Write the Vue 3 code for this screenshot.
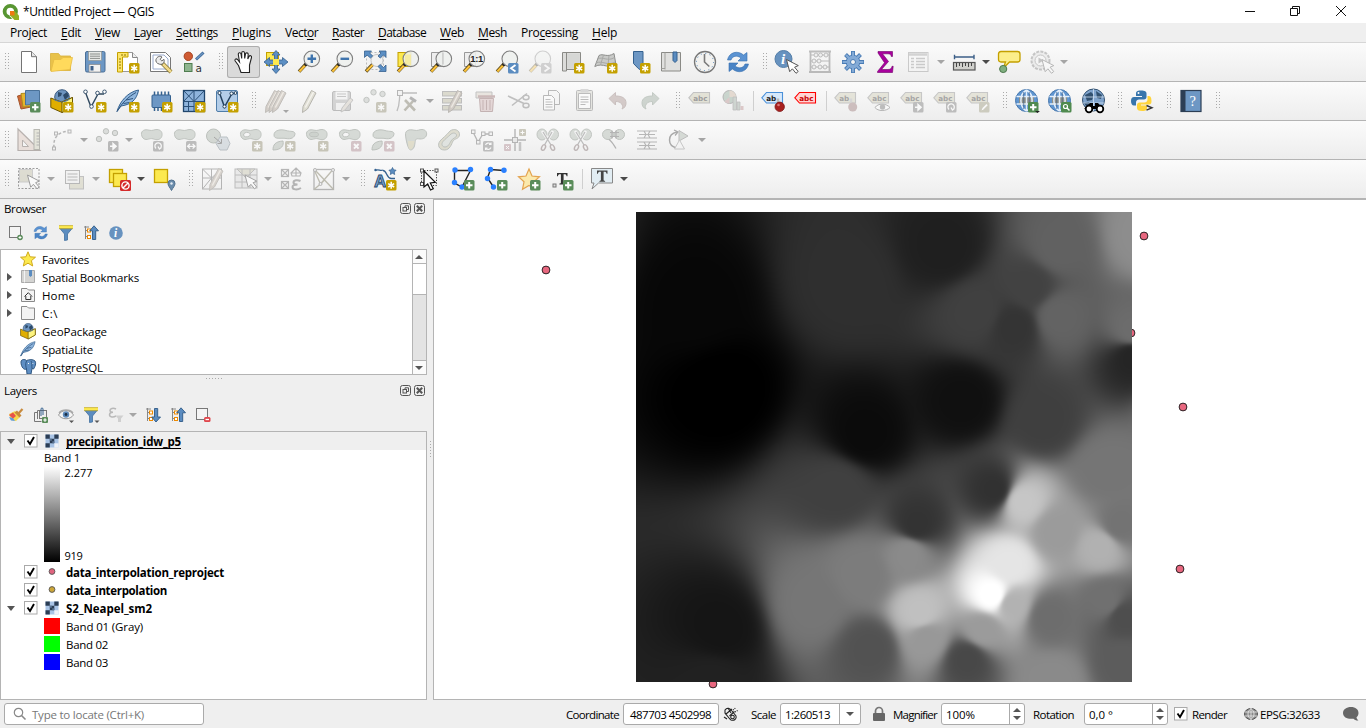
<script setup>
import { ref, onMounted } from 'vue'

/* ---------- text fitted to the metrics of the desktop theme ---------- */
const vFit = {
  mounted(el, { value }) {
    const w = el.getBoundingClientRect().width
    el.style.letterSpacing = (value - w) / el.textContent.length + 'px'
  }
}

/* ---------- icon building blocks ---------- */
const badge = (fill, inner) => `<rect x="13" y="13" width="10.5" height="10.5" rx="1.5" fill="${fill}"/>${inner}`
const star = '<path d="M18.2 14.8v7M15.2 16.6l6 3.4M21.2 16.6l-6 3.4" stroke="#fff" stroke-width="1.5"/>'
const NEW = badge('#c4a000', star)
const ADD = badge('#5a8c5a', '<path d="M18.2 15v6.6M15 18.3h6.5" stroke="#fff" stroke-width="2"/>')
const ROT = badge('#8a8a8a', '<path d="M16 20.5a3.2 3.2 0 1 1 3.6.4M18 18.5l1.4 2.6 2-1.6" stroke="#fff" stroke-width="1.3" fill="none"/>')
const MOV = badge('#8a8a8a', '<path d="M15 18.3h7M17 16l-2.4 2.3L17 20.6M19.6 16l2.4 2.3-2.4 2.3" stroke="#fff" stroke-width="1.3" fill="none"/>')
const ARR = badge('#8a8a8a', '<path d="M15 18.3h5M18 15.4l3.2 2.9-3.2 2.9z" stroke="#fff" stroke-width="1.4" fill="#fff"/>')
const DEL = badge('#b99aa0', '<path d="M16 16l4.600 4.600M20.600 16L16 20.600" stroke="#fff" stroke-width="2"/>')
const dim = (s, o = 0.38) => `<g opacity="${o}">${s}</g>`

const lens = (inside = '') =>
  `<path d="M9 14l-7 7.6" stroke="#5b4a1c" stroke-width="3.4"/><path d="M8 15.6l-5.6 5.8" stroke="#fcc23a" stroke-width="2.1"/><circle cx="9" cy="14.4" r="1.7" fill="#222"/>
   <circle cx="14.8" cy="8.8" r="7.8" fill="#eef0ee" fill-opacity=".88" stroke="#7f7f7f" stroke-width="1.1"/>${inside}`
const cursor = (x, y, c = '#fff', s = '#555') =>
  `<path transform="translate(${x} ${y})" d="M0 0l3.2 12.2 2.7-2.9 3.6 4.5 2.2-1.8-3.6-4.3 3.7-1.6z" fill="${c}" stroke="${s}" stroke-width="1"/>`
const folderLine = '<path d="M1.500 1.500h5.500l1.500 1.500h6v11.500h-13z" fill="#f3f3f3" stroke="#8a8a8a"/>'
const globe = `<circle cx="11.500" cy="11.500" r="11" fill="#5f95d0" stroke="#4576ac"/>
  <path d="M4 7h15v9H4z" fill="#8e9089"/>
  <path d="M11.500 1v21M1.500 7.500h20M1.500 15h20M11.500 1C4 5 4 18 11.500 22M11.500 1c7.500 4 7.500 17 0 21" stroke="#e4effb" stroke-width="1.500" fill="none"/>
  <path d="M8.700 3v17M14.300 3v17" stroke="#44618a" stroke-width=".7"/>`
const tag = (fill, stroke, text, o = 'abc', extra = '') =>
  `<path d="M.8 8.800L5.500 3.500h16v10.500h-16z" fill="${fill}" stroke="${stroke}" stroke-width="1.100"/>
   <text x="5.200" y="11.600" font-family="DejaVu Sans, Open Sans, sans-serif" font-weight="700" font-size="7.200" fill="${text}">${o}</text>${extra}`
const blob = `<path d="M1.500 6.500C1 2.500 5 1 9 2.200c3.500 1 5-.8 8-.7 4 .2 5.500 3 5 6-.6 3.500-4 5-7.500 3.800-2-.8-3.500-1-6-.2C5 12.300 2 10.500 1.500 6.500z" fill="#b9c1b9" stroke="#8d958d"/>`
const hole = '<path d="M4.500 7c0-2 2.500-3 4.500-2.500S12 7 10 8.200 4.600 9 4.500 7z" fill="#f6f6f6" stroke="#8d958d"/>'
const leaf = '<path d="M1 22c0-5 2-8.500 10-9 1 4-1 9-10 9z" fill="#b9c1b9" stroke="#8d958d"/>'
const nodes = (pts) => pts.map(([x, y]) => `<circle cx="${x}" cy="${y}" r="2.700" fill="#2a80ff"/>`).join('')
const scissor = `<ellipse cx="6" cy="6.500" rx="5" ry="5.500" fill="#b9c1b9" stroke="#8d958d"/><ellipse cx="17.500" cy="6.500" rx="5" ry="5.500" fill="#b9c1b9" stroke="#8d958d"/>
  <path d="M6 3l9.500 14M17 3L8.500 17" stroke="#f5f5f5" stroke-width="2.600"/><path d="M7 4l8 13M16 4L8.500 17" stroke="#888" stroke-width="1.300"/>
  <ellipse cx="7.500" cy="19.500" rx="1.800" ry="3" fill="none" stroke="#8a7a7a" stroke-width="1.400" transform="rotate(25 7.500 19.500)"/><ellipse cx="16.500" cy="19.500" rx="1.800" ry="3" fill="none" stroke="#8a7a7a" stroke-width="1.400" transform="rotate(-25 16.500 19.500)"/>`
const box = `<circle cx="12" cy="8" r="7.300" fill="#6d94bf" stroke="#3b5c82"/><path d="M8 3l4 1-1 3-3 1zM13 6l4-3 2 4-4 4z" fill="#2d4a69"/><path d="M.8 9l4 1.500 7 2.500L22.500 8.500v9L12 23.500.8 18.500z" fill="#e0ae00" stroke="#6b5500"/><path d="M12 13l10.500-4.500v9L12 23.500z" fill="#fdf480" stroke="#6b5500"/><path d="M3 10l9 3 8.500-3.500c-3 4.500-13 5-17.500.5z" fill="#4f759f"/>`
const feather = '<path d="M1 22.500C4 12 12 3 22.500 1c-1 6-4 11-9 13.500-3 1.500-6 2-8.500 2.500z" fill="#8fb6de" stroke="#34618f"/><path d="M1 22.500C6 14 12 8 20 3.500M7.500 14.500l6-1M10 11l7-1.500" stroke="#2f5680" stroke-width="1" fill="none"/>'
const refresh = '<path d="M1.500 10C3 2 12 0 17.500 5l3.500-2.500V11h-9l3-3C11 5 6.500 5.800 5 10z" fill="#5b93d2" stroke="#356fae" stroke-width=".6"/><path d="M22.500 14C21 22 12 24 6.500 19L3 21.500V13h9l-3 3c4 3 8.500 2.200 10-2z" fill="#4a84c6" stroke="#356fae" stroke-width=".6"/>'
const pencil = (x = 0) => `<path transform="translate(${x} 0)" d="M7 17.500L15.500 1.500l4.500 2.500L11.500 20 6.500 23.500z" fill="#bdb3a8" stroke="#96918a"/><path transform="translate(${x} 0)" d="M9.300 18.500L17.500 3" stroke="#e8e2d8" stroke-width="1.500"/>`

/* ---------- 24 × 24 toolbar icons ---------- */
const icons = {
  new: '<path d="M4.500 1.500h10l5 5.200v15.800h-15z" fill="#fff" stroke="#747474"/><path d="M14.500 1.500v5.200h5" fill="#e6e6e6" stroke="#747474"/>',
  open: '<path d="M.5 20.500v-17h8l2 2.500h10v14.500z" fill="#e8c24a" stroke="#d8b038" stroke-width=".8"/><path d="M1 21.500L4 9.500l7 0 2-2h9.500l-2.500 12z" fill="#ffda5c" stroke="#e7bd44" stroke-width=".8"/>',
  save: '<rect x="2.500" y="1.500" width="19.500" height="20.500" rx="1.500" fill="#6d97c4" stroke="#4a6f97"/><rect x="5.500" y="1.500" width="13" height="9" fill="#e7e9e7" stroke="#909590" stroke-width=".7"/><path d="M7 4h10M7 6.200h10M7 8.400h10" stroke="#8b8f8b"/><rect x="6" y="14.500" width="11.500" height="7.500" fill="#f2f2f2" stroke="#888" stroke-width=".7"/><rect x="7.500" y="16" width="3" height="4.500" fill="#3c5f88"/>',
  newlayout: `<path d="M6.500 2.500h10l5 5v14h-15z" fill="#fff" stroke="#999"/><path d="M16.500 2.500v5h5" fill="#eee" stroke="#888"/><path d="M1.500 2.500h10.500v4.500H6.500v15h-5z" fill="#fce56a" stroke="#c4a000"/><path d="M3 9h2M3 12h2M3 15h2M3 18h2M6 4v2M9 4v2" stroke="#8f7500"/>${NEW}`,
  layouts: '<path d="M1.500 2.500h15l5 5v14h-20z" fill="#fff" stroke="#777"/><path d="M4 5h11l4 4v10H4z" fill="none" stroke="#9ac"/><path d="M12 12l10 10" stroke="#7b6d2c" stroke-width="4"/><path d="M14 14l8 8" stroke="#f1d98a" stroke-width="2.600"/><path d="M7 9.500c1-3 4-4 6-2.500l-1.800 2.300 1.600 1.600L15 9.400c1 3-1.500 5.600-4.500 4.800S6.500 11.500 7 9.500z" fill="#ececec" stroke="#666"/>',
  style: '<circle cx="6.300" cy="6.300" r="4.200" fill="#cf5b33" stroke="#a54220"/><path d="M14 9.500l7.500-7" stroke="#3f6a9a" stroke-width="3"/><path d="M14.500 9l6.500-6" stroke="#6d97c4" stroke-width="1.200"/><rect x="2.500" y="13.500" width="7.500" height="8" fill="#8fb58f" stroke="#4f7d4f"/><text x="13.500" y="21.500" font-family="DejaVu Sans,sans-serif" font-size="10.500" fill="#333">a</text>',
  hand: '<path d="M7.500 15.500L4.200 11c-1-1.500.8-3 2.300-1.500L8.500 12 7.300 4.500C7 2.500 9.600 2.200 10 4l.7 4.500L10.700 3c0-2 2.700-2 2.800 0l.2 5.500L14.500 4c.3-1.800 2.900-1.400 2.700.5L16.800 9l1.200-2.500c.8-1.700 3-.8 2.500 1L18.500 15v7.500h-8.500z" fill="#fff" stroke="#222" stroke-width="1.100"/>',
  panmap: '<rect x="2.500" y="2.500" width="12" height="13" fill="#fce94f" stroke="#c4a000"/><path d="M12 .500l4 4.500h-2.500v5h5V7.500L24 12l-5.500 4.500V14h-5v5H16l-4 4.500L8 19h2.500v-5h-5v2.500L0 12l5.500-4.500V10h5V5H8z" fill="#5c8fc4" stroke="#36618f" stroke-width=".8"/><rect x="9" y="9" width="6" height="6" fill="#fce94f"/>',
  zoomin: lens('<path d="M14.800 4.500v8.600M10.500 8.800h8.600" stroke="#3f74ad" stroke-width="2.400"/>'),
  zoomout: lens('<path d="M10.500 8.800h8.600" stroke="#3f74ad" stroke-width="2.400"/>'),
  full: `<rect x="3.500" y="2.500" width="17" height="17" fill="#f2f2f2" stroke="#bbb" stroke-dasharray="2 2"/><path d="M11 13l-8 8.500" stroke="#5b4a1c" stroke-width="3.400"/><path d="M10 14.500L3.500 21" stroke="#fcc23a" stroke-width="2"/><circle cx="14" cy="10.500" r="6" fill="#f2f2f2" stroke="#c4c4c4"/><path d="M1.500 1h7L6.700 3l3 3L7.500 8 4 5 1.500 7.500zM23 1h-7l2 2-3 3 2.200 2L20.500 5 23 7.500zM23 21.500h-7l2-2-3-3 2.200-2 3.300 3L23 15z" fill="#5c8fc4" stroke="#36618f" stroke-width=".8"/>`,
  zoomsel: `<rect x="2" y="2.500" width="13" height="14" fill="#fce94f" stroke="#c4a000"/>${lens('<path d="M9 4.500h6v11l-6-1.500z" fill="#f5e88c" opacity=".7"/>')}`,
  zoomlayer: `<path d="M2.500 2.500h11v14h-11z" fill="#eee" stroke="#999"/>${lens('<path d="M14 2.500v12" stroke="#bbb"/>')}`,
  native: `<path d="M2.500 2.500h11v14h-11z" fill="#eee" stroke="#999"/>${lens('<text x="8.300" y="12.300" font-family="Liberation Sans,Arial,sans-serif" font-weight="700" font-size="9.500" textLength="13" fill="#222">1:1</text>')}`,
  last: `${lens()}${badge('#5b8cc0', '<path d="M20.500 15l-4.500 3.300 4.500 3.300" stroke="#fff" stroke-width="1.800" fill="none"/>')}`,
  next: dim(`${lens()}${badge('#8a8a8a', '<path d="M16.500 15l4.500 3.300-4.500 3.300" stroke="#fff" stroke-width="1.800" fill="none"/>')}`, 0.33),
  newmap: `<path d="M2 2.500h17.500v17H5.500v1.500H1.500V2.500z" fill="#dcdcda" stroke="#8a8a86"/><path d="M5.500 2.500v18" stroke="#8a8a86"/><path d="M6.500 4h12v14h-12z" fill="#d6d7d5"/>${NEW}`,
  new3d: `<path d="M5 5.500C9 3 13 8 20 3.500L22 15C16 20 9 12 .8 16.500z" fill="#c9cac8" stroke="#8c8d8b"/><path d="M3.500 9c5-3 10 3 17-1.500M2 13c6-3 12 3.500 19-1M9.500 5L6.500 15M15 5.500l-1 10" stroke="#a8a9a7" fill="none"/>${NEW}`,
  newbm: `<path d="M6.500 1.500h9.500v20l-4.700-3-4.800-5z" fill="#6d97c4" stroke="#34618f"/>${NEW}`,
  bm: '<path d="M1.500 2.500h19v18.500h-19z" fill="#e0e0de" stroke="#8a8a86"/><path d="M5 2.500v17M1.500 18.500h3.500" stroke="#a0a09c"/><path d="M13 2h4v8.500l-2 2-2-2z" fill="#5b8cc0" stroke="#34618f"/>',
  clock: '<circle cx="12" cy="12" r="10.500" fill="#f2f2f0" stroke="#777" stroke-width="1.300"/><circle cx="12" cy="12" r="8.600" fill="none" stroke="#4b7db0" stroke-width="1" stroke-dasharray="1 3.500"/><path d="M11.500 4v8l4.800 4.500" stroke="#7a7a7a" stroke-width="1.600" fill="none"/>',
  refresh,
  identify: `<circle cx="8.500" cy="9" r="8.500" fill="#6792bf" stroke="#557fa9"/><text x="6" y="14" font-family="Liberation Serif,serif" font-style="italic" font-weight="700" font-size="15" fill="#fff">i</text>${cursor(11.500, 9.500)}`,
  abacus: dim('<path d="M2.500 1v22M21.500 1v22M1 1.500h22M1 22h22" stroke="#777" stroke-width="1.800"/><path d="M3 5h18M3 11h18M3 17h18" stroke="#777"/><g fill="#e8e8e8" stroke="#777"><circle cx="8" cy="5" r="2"/><circle cx="12.500" cy="5" r="2"/><circle cx="18" cy="5" r="2"/><circle cx="6" cy="11" r="2"/><circle cx="11" cy="11" r="2"/><circle cx="6" cy="17" r="2"/><circle cx="12" cy="17" r="2"/><circle cx="17" cy="17" r="2"/></g>', 0.45),
  gear: '<g stroke="#4a7cb5" stroke-width="4"><path d="M12 1v22M1 12h22M4.500 4.500l15 15M19.500 4.500l-15 15"/></g><circle cx="12" cy="12" r="6.800" fill="#83aad6" stroke="#4a7cb5"/><g stroke="#83aad6" stroke-width="2.200"><path d="M12 1.700v20.600M1.700 12h20.600M5 5l14 14M19 5L5 19"/></g><circle cx="12" cy="12" r="5.500" fill="#83aad6"/><circle cx="12" cy="12" r="2.500" fill="#f5f5f5" stroke="#4a7cb5"/>',
  sigma: '<path d="M4 1.500h14.500v5h-1.200c-.4-2-1.300-2.700-3.300-2.700H8.500l6 7.700L7.500 19.500H14c2.600 0 3.500-1 4-3.200h1.200L18.500 22.500H3.500v-1l7-8.800L4 3z" fill="#a8009d" stroke="#6f0068" stroke-width=".6"/>',
  table: dim('<rect x="1.500" y="2.500" width="19.500" height="19" fill="#f7f7f7" stroke="#888"/><path d="M2 4.500h18" stroke="#999" stroke-width="2.500"/><path d="M4 8.500h3M9 8.500h9M4 11.500h3M9 11.500h9M4 14.500h3M9 14.500h9M4 17.500h3M9 17.500h9" stroke="#888" stroke-width="1.300"/>', 0.38),
  measure: '<path d="M2 7h20M2.500 4.800v4.400M22 4.800v4.400" stroke="#3c5f88" stroke-width="1.400"/><rect x="1.500" y="12.500" width="21.500" height="7.500" fill="#d0d0cc" stroke="#555" stroke-width="1.200"/><path d="M4.500 13v4M7.500 13v3M10.500 13v4M13.500 13v3M16.500 13v4M19.500 13v3" stroke="#444"/>',
  tip: '<path d="M4 1.500h16.500q2.500 0 2.500 2.500v5.500q0 2.500-2.500 2.500H12.500l-6 6 2-6H4q-2.500 0-2.500-2.500V4q0-2.500 2.500-2.500z" fill="#fcee8a" stroke="#c4a000" stroke-width="1.300"/><circle cx="6.200" cy="19" r="3.600" fill="#7fae7f" stroke="#4d784d"/>',
  action: dim(`<circle cx="10.500" cy="10.500" r="9" fill="#ddd" stroke="#777" stroke-width="2" stroke-dasharray="3 1.200"/><circle cx="10.500" cy="10.500" r="5.500" fill="#f5f5f5" stroke="#777"/><path d="M8.500 7.500l5 3-5 3z" fill="#777"/>${cursor(12, 9.500)}`, 0.38),
  dsm: `<path d="M.5 7l13-3.500 3 14L4 20z" fill="#cf6a35" stroke="#a3562c"/><path d="M4 4.500l13-1 1 13.500-12 1z" fill="#e5b52e" stroke="#b08c1c"/><path d="M8.500 1.500L22.500 1.500v13.500l-14 1z" fill="#6d97c4" stroke="#4a7199"/>${ADD}`,
  gpkg: `${box}${NEW}`,
  shp: `<path d="M2.500 3.500L8 18 15 5h6" stroke="#31495f" stroke-width="1.400" fill="none"/><g fill="#fff" stroke="#3c5670"><circle cx="2.500" cy="2.800" r="1.800"/><circle cx="8.500" cy="17.500" r="1.800"/><circle cx="14.500" cy="4" r="1.800"/><circle cx="21.500" cy="2.800" r="1.800"/></g>${NEW}`,
  spatialite: `${feather}${NEW}`,
  memory: `<rect x="3" y="6" width="18.500" height="12.500" rx="1" fill="#6d97c4" stroke="#34618f"/><path d="M5.500 2.500V6M9 2.500V6M12.500 2.500V6M16 2.500V6M19.500 2.500V6M5.500 18.500V22M9 18.500V22M12.500 18.500V22" stroke="#34618f" stroke-width="1.500"/>${NEW}`,
  mesh: `<rect x="1.500" y="1.500" width="21" height="21" fill="#8fb4dc" stroke="#20456b" stroke-width="1.300"/><path d="M12 1.500v21M1.500 12.500h21M1.500 1.500l10.500 11M12 1.500l-10.500 11M12 12.500l10.500-11M6.500 12.500v10M1.500 17.500h10.500" stroke="#2c5178" stroke-width="1"/>${NEW}`,
  virtual: `<rect x="1.500" y="1.500" width="21" height="21" rx="1.500" fill="#b3cde8" stroke="#4f7da9"/><path d="M4.500 4L9.500 18 17 4.500h3" stroke="#23415e" stroke-width="1.500" fill="none"/><g fill="#fff" stroke="#23415e"><circle cx="4.500" cy="4" r="1.600"/><circle cx="9.500" cy="17.500" r="1.600"/><circle cx="16.500" cy="4.500" r="1.600"/><circle cx="20.500" cy="4" r="1.400"/></g>${NEW}`,
  edits: `${dim(pencil(-5) + pencil(-1.500) + pencil(2), 0.55)}<path d="M19 21h6l-3 3z" fill="#a5a5a5"/>`,
  edit: dim('<path d="M6 17.500L14.500 1.500l4.500 2.500L10.500 20 5.500 23.500z" fill="#d6d4c4" stroke="#96948a"/><path d="M8.300 18.500L16.500 3" stroke="#f4f2ea" stroke-width="1.500"/>', 0.65),
  saveedit: dim('<rect x="2.500" y="2.500" width="18" height="19" rx="1.500" fill="#b4b4b4" stroke="#888"/><rect x="5.500" y="2.500" width="12" height="8" fill="#f2f2f2"/><path d="M7 5h9M7 7.500h9" stroke="#999"/><rect x="6" y="14" width="10" height="7" fill="#eee"/><path d="M12 19l8-10 3 2-8 10-4 2z" fill="#d8d2c8" stroke="#999"/>', 0.5),
  addpt: dim(`<g fill="#c5c9c5" stroke="#909590"><circle cx="3.500" cy="11" r="2.700"/><circle cx="10.500" cy="3.300" r="2.700"/><circle cx="19.500" cy="5" r="2.700"/></g>${badge('#a09c84', star)}`, 0.5),
  vertex: dim('<path d="M4 4v0C3 12 4 15 1 22M5 4h16" stroke="#888" fill="none" stroke-width="1.300"/><rect x="1.500" y="1.500" width="5" height="5" fill="#eee" stroke="#777"/><path d="M8.500 21.500l10-11M9 11l10 10.500" stroke="#8b8877" stroke-width="2.600"/><path d="M14 8.500l6 4" stroke="#777" stroke-width="3"/>', 0.5),
  multiedit: dim(`<g fill="#c9c7b4" stroke="#999"><rect x="1.500" y="2.500" width="19" height="4.500"/><rect x="1.500" y="9.500" width="19" height="4.500"/><rect x="1.500" y="16.500" width="19" height="4.500"/></g>${pencil(1)}`, 0.6),
  trash: dim('<path d="M2 3h16v6H2z" fill="#ddd6cc" stroke="#999"/><path d="M4 7.500h17" stroke="#a88" stroke-width="2.500"/><path d="M5.500 9.500h14l-1 13h-12z" fill="#d8c0c0" stroke="#a08080"/><path d="M9 11v10M12.500 11v10M16 11v10" stroke="#a08080"/>', 0.55),
  cut: dim('<path d="M1 7l16 7.500M5 16.500L20 4.500" stroke="#777" stroke-width="1.600"/><ellipse cx="19" cy="8.500" rx="3" ry="2.200" fill="none" stroke="#777" stroke-width="1.500"/><ellipse cx="19" cy="16.500" rx="3" ry="2.200" fill="none" stroke="#777" stroke-width="1.500"/>', 0.42),
  copy: dim('<path d="M8.500 1.500h8l3 3v11h-11z" fill="#f6f6f6" stroke="#777"/><path d="M3.500 6.500h8l3 3v11.500h-11z" fill="#fff" stroke="#777"/><path d="M5.500 10.500h5M5.500 13h7M5.500 15.500h7M5.500 18h7" stroke="#888"/>', 0.48),
  paste: dim('<rect x="3.500" y="1.500" width="16" height="20" rx="1" fill="#d8d8d0" stroke="#888"/><path d="M5.500 4.500h12v15h-12z" fill="#fff" stroke="#888"/><path d="M7.500 8h8M7.500 10.500h8M7.500 13h8M7.500 15.500h5" stroke="#888"/><rect x="7.500" y="0" width="8" height="3.500" fill="#bbb"/>', 0.52),
  undo: dim('<path d="M3 9.500L9.500 3.500v3.500c7 0 10.500 2.500 10.500 7 0 3-1.500 5-4 6 1-2 1-3-.5-5.200C14.300 13 12 12.500 9.500 12.500V16z" fill="#b5a29f" stroke="#a08d8a"/>', 0.5),
  redo: dim('<path d="M20 9.500L13.500 3.500v3.500C6.500 7 3 9.500 3 14c0 3 1.500 5 4 6-1-2-1-3 .5-5.200 1.200-1.800 3.500-2.300 6-2.300V16z" fill="#a9b5ab" stroke="#93a095"/>', 0.5),
  lab1: dim(tag('#d4d2bd', '#999', '#555'), 0.55),
  diagram: dim('<circle cx="8.500" cy="8" r="6.500" fill="#a9bdb0" stroke="#888"/><path d="M8.500 8V1.500A6.500 6.500 0 0 1 15 8z" fill="#d6c5b5"/><path d="M8.500 8l-5 4.500a6.500 6.500 0 0 0 5 2z" fill="#c9a9a9"/><path d="M12 8h3.500v13H12zM16 13h3v8h-3z" fill="#b5c0b8" stroke="#999" stroke-width=".8"/><rect x="19.500" y="17" width="3" height="4" fill="#caa"/>', 0.58),
  lab2: tag('#d7e9fb', '#4a90d9', '#222', 'ab', '<path d="M17 16.500V9.500" stroke="#b9b9b9" stroke-width="2.500"/><circle cx="18.700" cy="17.800" r="4.700" fill="#a8201f" stroke="#7c1212" stroke-width=".8"/><circle cx="17.500" cy="16" r="1.300" fill="#d77"/>'),
  lab3: tag('#ffd5d5', '#f00', '#c80000'),
  lab4: dim(tag('#d4d2bd', '#999', '#555', 'ab', '<path d="M17 16.500V9.500" stroke="#b9b9b9" stroke-width="2.500"/><circle cx="18.700" cy="18" r="4.500" fill="#a88a8a"/>'), 0.5),
  lab5: dim(tag('#d4d2bd', '#999', '#555', 'abc', '<path d="M8 18.500c3-4.500 11-4.500 15 0-4 4-12 4-15 0z" fill="#fff" stroke="#777"/><circle cx="15.500" cy="18" r="2.700" fill="#888"/>'), 0.5),
  lab6: dim(tag('#d4d2bd', '#999', '#555', 'abc', ARR), 0.5),
  lab7: dim(tag('#d4d2bd', '#999', '#555', 'abc', ROT), 0.5),
  lab8: dim(tag('#d4d2bd', '#999', '#555', 'abc', badge('#a9a78e', '<path d="M15.500 21.500l1-2.500 4-4 1.200 1.200-4 4z" fill="#fff"/>')), 0.5),
  web1: `${globe}${badge('#4f8a4f', '<path d="M18.200 15v6.600M15 18.300h6.500" stroke="#fff" stroke-width="2"/>')}<path d="M20 22h5l-2.500 2z" fill="#222"/>`,
  web2: `${globe}${badge('#4f8a4f', '<circle cx="17.500" cy="17.500" r="2" fill="none" stroke="#fff" stroke-width="1.200"/><path d="M19 19l2.500 2.500" stroke="#fff" stroke-width="1.500"/>')}`,
  web3: '<circle cx="12.500" cy="11" r="11" fill="#7fa3cc" stroke="#31506f"/><path d="M4 6l6-3 3 3-2 5-5 1zM15 2l6 4-1 4-4-1zM3 14l5-1 2 5-3 2z" fill="#31506f"/><path d="M12.500 0v22M2 8h21M2 14h21" stroke="#cfe0f2" stroke-width=".8"/><path d="M9 14h3v3h2v-3h3l5 6h-19z" fill="#000"/><circle cx="8" cy="20" r="3.300" fill="#fff" stroke="#000" stroke-width="1.800"/><circle cx="19" cy="20" r="3.300" fill="#fff" stroke="#000" stroke-width="1.800"/>',
  python: '<path d="M11 1.500c-4.500 0-5 1.500-5 3v2.500h6v1H4C2 8 1 9.500 1 12s1 4.500 3 4.500h2v-3c0-2 1.500-3 3-3h5c1.500 0 2.500-1 2.500-2.500V4.500c0-2-1.500-3-5.500-3z" fill="#3775ac"/><path d="M12 22c4.500 0 5-1.500 5-3v-2.500h-6v-1h8c2 0 2.500-1.500 2.500-3.500s-.5-5-2.500-5h-1.500v3.500c0 2-1.500 3-3 3h-5c-1.500 0-2.500 1-2.500 2.500v3c0 2 1.500 3 5 3z" fill="#ffd43b"/><circle cx="8.500" cy="4" r="1" fill="#fff"/><path d="M16.500 16.500l5.500 2.300-5.500 2.400" stroke="#333" stroke-width="1.400" fill="none"/>',
  help: '<rect x="2" y="1.500" width="20" height="21" fill="#6d97c4" stroke="#2c3e55" stroke-width="1.200"/><rect x="2" y="1.500" width="4.500" height="21" fill="#2c3e55"/><text x="10.500" y="17" font-family="Liberation Serif,serif" font-size="14.500" fill="#fff">?</text>',
  setsq: dim('<path d="M1 1v21.500h22z" fill="#e3d3cb" stroke="#8f8580" stroke-width="1.200"/><path d="M5.500 12v6.500h6z" fill="#f6f6f6" stroke="#8f8580"/><rect x="17" y="1.500" width="5.500" height="20" fill="#d9d9c8" stroke="#8f8f85"/><path d="M19.500 5h3M19.500 8h3M19.500 11h3M19.500 14h3M19.500 17h3" stroke="#888"/>', 0.6),
  arc: dim('<path d="M4 20C3 9 8 4 19 3" stroke="#777" stroke-width="1.500" fill="none" stroke-dasharray="3 2"/><g fill="#eee" stroke="#777"><rect x="2.500" y="19" width="3" height="3"/><rect x="4.500" y="4" width="3" height="3"/><rect x="18" y="2" width="3" height="3"/></g>', 0.5),
  movept: dim(`<g fill="#c5c9c5" stroke="#909590"><circle cx="4" cy="11" r="2.700"/><circle cx="11" cy="3.300" r="2.700"/><circle cx="20" cy="5" r="2.700"/></g>${ARR}`, 0.55),
  rotf: dim(blob + ROT, 0.52),
  movf: dim(blob + MOV, 0.52),
  simp: dim('<circle cx="7.500" cy="8" r="7" fill="#b9c1b9" stroke="#8d958d"/><path d="M14 9h7l3 6.500-3 6.500h-7l-4-6.500z" fill="#c3ccd3" stroke="#8d98a0"/><path d="M8 9l7 6M15.500 11v4.500h-4" stroke="#666" fill="none"/>', 0.55),
  ring: dim(blob + hole + badge('#a09c84', star), 0.52),
  part: dim(`<path d="M2 7C2 2 9 1 14 2.500s8 0 9 3c0 4-4 6-9 5S2 12 2 7z" fill="#b9c1b9" stroke="#8d958d"/>${leaf}${badge('#a09c84', star)}`, 0.52),
  fill: dim(blob + '<ellipse cx="9" cy="6.500" rx="4.500" ry="2.300" fill="#a9b3a9" stroke="#8d958d"/>' + badge('#a09c84', star), 0.52),
  delring: dim(blob + hole + DEL, 0.52),
  delpart: dim(`<path d="M2 7C2 2 9 1 14 2.500s8 0 9 3c0 4-4 6-9 5S2 12 2 7z" fill="#b9c1b9" stroke="#8d958d"/>${leaf}${DEL}`, 0.52),
  reshape: dim('<path d="M1.500 7C1 2.500 5 1 10 2.200c4 1 5-.8 8-.7 4 .2 5 3 4.500 5.500-.6 3-4 4.500-8 3.800-4-.6-3 3-4 7-1 3.500-3.500 5-5 3.500C3.500 19 2 12 1.500 7z" fill="#b9c1b9" stroke="#8d958d"/><path d="M4 13h6.500c-.5 5-2 8-4 8.500C4 21 4 17 4 13z" fill="#cfc9a8"/>', 0.52),
  offset: dim('<path d="M13 3c4-3 10-1 9.500 4-.5 4-5 3.500-6.500 6-1.500 3-3 9-8.500 9C2 22 0 17 3 13c2.500-3 6-5 10-10z" fill="#c9c6ae" stroke="#8d958d"/><path d="M14 6c3-2 6-.5 5.500 2-.5 2-4 2-5.500 5s-3 6-6 6-4-3-2-5.500c2-2.500 5-4.500 8-7.500z" fill="#cfd5cf" stroke="#8d958d"/>', 0.52),
  splitv: dim(`<path d="M3 4l5 10L13 6h8" stroke="#777" stroke-width="1.300" fill="none"/><g fill="#eee" stroke="#777"><rect x="1.500" y="2" width="3.500" height="3.500"/><rect x="6.500" y="12.500" width="3.500" height="3.500"/><rect x="11.500" y="4" width="3.500" height="3.500"/><rect x="19" y="4" width="3.500" height="3.500"/></g>${badge('#8a8a8a', '<path d="M15.500 17a3 3 0 0 1 5-1M21 19.500a3 3 0 0 1-5 1M21 14.500v2h-2M15.500 22v-2h2" stroke="#fff" stroke-width="1.100" fill="none"/>')}`, 0.5),
  cross: dim('<path d="M12 1v22M1 12h22" stroke="#777" stroke-width="1.400"/><rect x="9.500" y="9.500" width="5" height="5" fill="#ddd" stroke="#777"/><path d="M17 14v9" stroke="#999" stroke-width="2.500"/><rect x="16" y="1" width="7" height="7" rx="1" fill="#a09c84"/><path d="M19.500 2.500v4M17.500 4.500h4" stroke="#fff"/><rect x="1" y="16" width="7" height="7" rx="1" fill="#b99aa0"/><path d="M3 18l3 3M6 18l-3 3" stroke="#fff"/>', 0.5),
  splitf: dim(scissor, 0.5),
  splitp: dim(scissor, 0.5),
  merge: dim('<ellipse cx="6" cy="6.500" rx="5.500" ry="5" fill="#b9c1b9" stroke="#8d958d"/><ellipse cx="17.500" cy="6.500" rx="5" ry="5" fill="#b9c1b9" stroke="#8d958d"/><path d="M8 4.500h9M8 8.500h9M10 2.500v8M14 2.500v8M7 11.500c3 2 5 6 7 9" stroke="#777" fill="none" stroke-width="1.200"/>', 0.52),
  align: dim('<path d="M2 3h20M2 10h20M2 14h20M2 21h20M4 6.500h16M4 17.500h16M9 3l2 3.500L9 10M15 3l-2 3.500 2 3.500M9 14l2 3.500L9 21M15 14l-2 3.500 2 3.500" stroke="#777" stroke-width="1.100" fill="none"/>', 0.5),
  rotsym: dim('<path d="M9 20C-1 18-1 6 9 4" stroke="#777" fill="none" stroke-width="1.400"/><path d="M6 2l4 2-3 3.500" stroke="#777" stroke-width="1.200"/><path d="M11 2.500l9 5.500-9 5z" fill="#c0c8c0" stroke="#999"/><path d="M11.500 12l5 9h-10z" fill="#f4f4f4" stroke="#aaa"/>', 0.6),
  select: dim(`<rect x="1.500" y="1.500" width="20.500" height="20" fill="none" stroke="#555" stroke-dasharray="2 1.500"/><rect x="2.500" y="2.500" width="13" height="12.500" fill="#c9c7b4" stroke="#aaa"/>${cursor(10.500, 8)}`, 0.55),
  form: dim('<rect x="7.500" y="9.500" width="14" height="12.500" fill="#d2d0bb" stroke="#999"/><rect x="3.500" y="3.500" width="14" height="13" fill="#eee" stroke="#888"/><path d="M5.500 7h10M5.500 10h10M5.500 13h10" stroke="#aaa" stroke-width="1.600"/>', 0.55),
  desel: '<rect x="2.500" y="2.500" width="13" height="13" fill="#fce94f" stroke="#c4a000" stroke-width="1.300"/><rect x="6.500" y="6.500" width="13" height="13" fill="#fce94f" stroke="#c4a000" stroke-width="1.300"/><rect x="13" y="13" width="11" height="11" rx="1.500" fill="#d42a2a"/><circle cx="18.500" cy="18.500" r="3.600" fill="none" stroke="#fff" stroke-width="1.400"/><path d="M16 21l5-5" stroke="#fff" stroke-width="1.400"/>',
  loc: '<rect x="2.500" y="2.500" width="13" height="13" fill="#fce94f" stroke="#c4a000" stroke-width="1.300"/><path d="M19.500 23.500c-1.500-3-3.500-4.500-3.500-7a3.500 3.500 0 0 1 7 0c0 2.500-2 4-3.500 7z" fill="#6b8dac" stroke="#4f6f8d"/><circle cx="19.500" cy="16.500" r="1.200" fill="#e8eef4"/>',
  meshed: dim(`<rect x="1.500" y="2" width="19" height="20" fill="none" stroke="#777"/><path d="M1.500 2l9 9 10-9M1.500 22V11h19M10.500 2v20M1.500 22l9-11" stroke="#777" fill="none"/>${pencil(2)}`, 0.5),
  meshsel: dim(`<rect x="1" y="2" width="22" height="19" fill="#ddd" stroke="#888"/><path d="M3 2h18l-9 9z" fill="#cbc9b5" stroke="#888"/><path d="M1 8h22M1 15h22M8 2v19M16 2v19" stroke="#888"/>${cursor(11, 8)}`, 0.5),
  meshtr: dim('<g fill="none" stroke="#777" stroke-width="1.200"><rect x="2.500" y="2.500" width="7" height="7"/><path d="M2.500 2.500l7 7M9.500 2.500l-7 7"/><rect x="2.500" y="14.500" width="7" height="7"/><path d="M2.500 14.500l7 7M9.500 14.500l-7 7"/><path d="M17 1l5 5-1 3h-8l-1-3zM17 1v8M12 6h10"/></g><path d="M21.500 14c-3-1.500-7-1-7 1.500 0 2 2 2 4 2-3 0-5 .5-5 2.500 0 3 5 3 8.500 1" stroke="#777" stroke-width="2" fill="none"/>', 0.5),
  meshforce: dim('<rect x="2" y="2.500" width="19.500" height="20" fill="none" stroke="#777" stroke-width="1.300"/><path d="M2 2.500l6.500 14.500 12.500-14.500M8.500 17L2 22.500M8.500 17l4-4 9 9.500M12.500 13l-10-10.500" stroke="#88856e" stroke-width="1.300" fill="none"/><g fill="#eee" stroke="#777"><circle cx="3" cy="3" r="1.500"/><circle cx="21" cy="3" r="1.500"/><circle cx="8.500" cy="17" r="1.500"/></g>', 0.5),
  annot: `<path d="M2 3.500c4-2 5 1 8-.5M10 3.500c4 0 3 7 8 8h4" stroke="#34618f" fill="none" stroke-width="1.300"/><circle cx="2.500" cy="3" r="1.200" fill="#34618f"/><text x="1" y="20" font-family="Liberation Sans,Arial,sans-serif" font-weight="700" font-size="17" fill="#7fa6d0" stroke="#26496e" stroke-width=".9">A</text><path d="M19.500.500l1.100 2.300 2.500.4-1.800 1.800.4 2.500-2.200-1.200-2.200 1.200.4-2.500L15.900 3.200l2.500-.4z" fill="#5b8cc0" stroke="#34618f" stroke-width=".7"/>${NEW}`,
  modann: `<rect x="3.500" y="3.500" width="15" height="15" fill="none" stroke="#333" stroke-dasharray="1.200 1.500"/><g fill="#f5f5f5" stroke="#555"><rect x="2.500" y="2" width="3" height="3"/><rect x="17" y="2" width="3" height="3"/><rect x="2.500" y="15.500" width="3" height="3"/></g><path d="M6 4v16l3.700-3 2.800 6 2.800-1.300-3-5.700 5-.6z" fill="#fff" stroke="#111" stroke-width="1.200"/>`,
  poly: `<path d="M3.500 3.500h16L11 20 3.500 16z" fill="none" stroke="#222" stroke-width="1.400"/>${nodes([[4, 3], [19.500, 2.500], [3.500, 15.500], [11, 20]])}${ADD}`,
  line: `<path d="M20 3.500L6.500 2.500 3.500 11l6 9" fill="none" stroke="#222" stroke-width="1.400"/>${nodes([[20, 3.300], [6.500, 2.500], [3.500, 11.500], [9.500, 20]])}${ADD}`,
  starann: `<path d="M12 2l3 7 7.500 .8-5.600 5 1.600 7.500L12 18.500l-6.500 3.800L7 14.800 1.500 9.800 9 9z" fill="#fbe9ad" stroke="#e3a34f" stroke-width="1.200"/>${ADD}`,
  textann: `<rect x="3" y="17" width="3" height="3" fill="#ddd" stroke="#777"/><path d="M7 6h10.500v3.300h-.9c-.3-1.500-.8-2-2-2h-1v8.200c0 .8.3 1 1.500 1.100v.8H9.400v-.8c1.200-.1 1.500-.3 1.500-1.100V7.300h-1c-1.200 0-1.700.5-2 2H7z" fill="#333"/>${ADD}`,
  textballoon: '<path d="M1.500 1.500h21V16H8.500L2 22l2-6H1.500z" fill="#e2edf3" stroke="#888"/><path d="M7 3.500h10.500v3.300h-.9c-.3-1.500-.8-2-2-2h-1v8c0 .8.3 1 1.500 1.100v.8h-5.700v-.8c1.200-.1 1.500-.3 1.500-1.100v-8h-1c-1.200 0-1.700.5-2 2H7z" fill="#444"/>'
}

/* ---------- 16 × 16 panel icons ---------- */
const small = {
  add: '<rect x="1.500" y="1.500" width="11" height="11" fill="#f4f4f4" stroke="#777"/><circle cx="12" cy="12.500" r="2.800" fill="#5a8c5a"/><path d="M12 11v3M10.500 12.500h3" stroke="#fff"/>',
  refresh: `<g transform="scale(.64)">${refresh}</g>`,
  filter: '<path d="M1.500 3h13l-5 6v6l-3 .500V9z" fill="#5b8cc0" stroke="#41709f" stroke-width=".8"/><path d="M1 2h14" stroke="#fce94f" stroke-width="3"/><path d="M1 .6h14M1 3.700h14" stroke="#b59b18" stroke-width=".6"/>',
  collapse: '<path d="M2.500 1v13M2.500 5.500H6M2.500 11.500H6M1 2h5" stroke="#888" fill="none"/><rect x="4.500" y="4" width="3" height="3" fill="#fff" stroke="#f08b00"/><rect x="4.500" y="10.500" width="3" height="3" fill="#fff" stroke="#f08b00"/><path d="M11 .800l4.500 5h-2.800V14.500H9.500V5.800H6.700z" fill="#5b8cc0" stroke="#2f5a87" stroke-width=".9"/>',
  expand: '<path d="M2.500 1v13M2.500 5.500H6M2.500 11.500H6M1 2h5" stroke="#888" fill="none"/><rect x="4.500" y="4" width="3" height="3" fill="#fff" stroke="#f08b00"/><rect x="4.500" y="10.500" width="3" height="3" fill="#fff" stroke="#f08b00"/><path d="M11 15l4.500-5h-2.800V1.500H9.500V10H6.700z" fill="#5b8cc0" stroke="#2f5a87" stroke-width=".9"/>',
  info: '<circle cx="8" cy="8" r="6.800" fill="#6792bf"/><text x="6" y="12" font-family="Liberation Serif,serif" font-style="italic" font-weight="700" font-size="11.500" fill="#fff">i</text>',
  brush: '<path d="M1 7l6-3 5 6-4 4-5-1z" fill="#f5d84e"/><path d="M1 10l4 1 2 3-4-.5z" fill="#5f9de0"/><path d="M1 8l4-2.500 3 3.500-3 2.500z" fill="#e8524a"/><path d="M6.500 5.500l5 5 2-2-4.500-5z" fill="#c88a3c"/><path d="M10.500 6.500l4-4.500" stroke="#c88a3c" stroke-width="2.200"/>',
  group: '<path d="M1.500 5.500v9M1.500 5.500H4M4.500 3.500v8.500M4.500 3.500H7M1.500 14.500h7" stroke="#777" fill="none"/><rect x="6.500" y="3.500" width="7" height="8" fill="#eee" stroke="#777"/><path d="M8 9V2a1 1 0 0 1 2 0V8" stroke="#34618f" fill="none"/><rect x="9" y="10" width="6" height="6" rx="1" fill="#5a8c5a"/><path d="M12 11.300v3.400M10.300 13h3.400" stroke="#fff" stroke-width="1.200"/>',
  eye: '<path d="M.5 8C4 2 12 2 15.500 8 12 13 4 13 .5 8z" fill="#f5f5f5" stroke="#999"/><path d="M1 6C4 2 12 2 15 6" stroke="#aaa" fill="none" stroke-width="1.300"/><circle cx="8" cy="7.500" r="3.200" fill="#5c89ba"/><circle cx="8" cy="7.500" r="1.400" fill="#1c2f45"/><path d="M11 13.500h5l-2.500 2.500z" fill="#555"/>',
  filterc: '<path d="M1.500 3h13l-5 6v6l-3 .500V9z" fill="#5b8cc0" stroke="#41709f" stroke-width=".8"/><path d="M1 2h14" stroke="#fce94f" stroke-width="3"/><path d="M1 .6h14M1 3.700h14" stroke="#b59b18" stroke-width=".6"/><path d="M11.500 13.500h5l-2.500 2.500z" fill="#555"/>',
  expr: '<g opacity=".45"><path d="M8 2C5 .5 2 1.500 2 3.500 2 5 3.500 5.200 5 5.200 3 5.200 1.500 6 1.500 7.800c0 2.500 4 2.800 6.500 1" stroke="#777" stroke-width="1.500" fill="none"/><path d="M7.500 8.500h8l-2.500 3v3.500h-3v-3.500z" fill="#aaa"/></g>',
  remove: '<rect x="1.500" y="1.500" width="11" height="11" fill="#f4f4f4" stroke="#777"/><rect x="9" y="10" width="6.500" height="5" rx="1.500" fill="#e0464c"/><path d="M10.500 12.500h3.500" stroke="#fff" stroke-width="1.300"/>',
  star: '<path d="M8 .800l2.100 5 5.400.4-4.100 3.500 1.300 5.300L8 12.200 3.300 15l1.300-5.300L.5 6.200l5.400-.4z" fill="#fce94f" stroke="#d0aa1c"/>',
  bm: '<path d="M1.500 1.500h13v12h-13z" fill="#d4d4d2" stroke="#aaa"/><path d="M4.500 1.500v12" stroke="#f3f3f3"/><path d="M9 1h3v5.500l-1.500 1.500L9 6.500z" fill="#5b8cc0"/>',
  home: `${folderLine}<path d="M4.500 9.500l3.800-3.800 3.800 3.800M5.800 9v3.500h5V9" stroke="#333" fill="none"/>`,
  folder: folderLine,
  gpkg: `<g transform="scale(.68)">${box}</g>`,
  feather: `<g transform="scale(.67)">${feather}</g>`,
  pg: '<path d="M1 3c0-3 4-3 5.500-1.500C9 .500 13 0 15 2c1.500 2 0 6-1.500 8L12 9.500 11 15H7l-.5-5C4 11.500 1 8 1 3z" fill="#5f8fc4" stroke="#2f5680"/><path d="M6.500 2C5 5 6 8 6.500 10M11 2c1.500 2 .5 5 1 7.500" stroke="#2f5680" fill="none"/><path d="M8 4.500h1M12.500 4.500h.8" stroke="#fff"/>',
  raster: '<path d="M1.500 1.500h13v13h-13z" fill="#a9c4e6"/><path d="M1.500 1.500h4.300v4.300H1.500zM10.300 1.500h4.300v4.300h-4.300zM5.800 5.800h4.500v4.500H5.800zM1.500 10.300h4.300v4.300H1.500z" fill="#2b3d54"/><path d="M5.800 5.800h2v2h-2zM8.300 8.300h2v2h-2z" fill="#5b7595"/><path d="M10.300 10.300h4.300v4.300h-4.300z" fill="#f0f3f8"/>',
  pink: '<circle cx="8" cy="7.500" r="2.900" fill="#e0647f" stroke="#555" stroke-width=".9"/>',
  gold: '<circle cx="8" cy="7.500" r="2.900" fill="#cda637" stroke="#555" stroke-width=".9"/>'
}

/* ---------- toolbars: |: handle, / separator, v / V caret, otherwise an icon ---------- */
const bars = [
  '|: new open save newlayout layouts style |: hand panmap zoomin zoomout full zoomsel zoomlayer native last next newmap new3d newbm bm clock refresh |: identify abacus gear sigma table v measure V tip action v',
  '|: dsm gpkg shp spatialite memory mesh virtual |: edits edit saveedit addpt vertex v multiedit trash cut copy paste undo redo |: lab1 diagram / lab2 lab3 / lab4 lab5 lab6 lab7 lab8 |: web1 web2 web3 |: python |: help |:',
  '|: setsq arc v movept v rotf movf simp ring part fill delring delpart reshape offset splitv cross splitf splitp merge align rotsym v',
  '|: select v form v desel V loc |: meshed meshsel v meshtr meshforce v |: annot V modann poly line starann textann / textballoon V'
].map((b) => b.split(' '))

const menus = [
  ['Pro', 'j', 'ect', 37], ['', 'E', 'dit', 20], ['', 'V', 'iew', 25], ['', 'L', 'ayer', 28], ['', 'S', 'ettings', 42],
  ['', 'P', 'lugins', 39], ['Vect', 'o', 'r', 33], ['', 'R', 'aster', 32], ['', 'D', 'atabase', 48], ['', 'W', 'eb', 24],
  ['', 'M', 'esh', 29], ['Pro', 'c', 'essing', 57], ['', 'H', 'elp', 25]
]

const browser = [
  ['star', 'Favorites', 47, false], ['bm', 'Spatial Bookmarks', 97, true], ['home', 'Home', 33, true], ['folder', 'C:\\', 16, true],
  ['gpkg', 'GeoPackage', 65, false], ['feather', 'SpatiaLite', 51, false], ['pg', 'PostgreSQL', 61, false]
]
const lower = [
  { icon: 'pink', text: 'data_interpolation_reproject', w: 158 },
  { icon: 'gold', text: 'data_interpolation', w: 101 },
  { icon: 'raster', text: 'S2_Neapel_sm2', w: 86, open: true }
]
const bands = [['red', 'Band 01 (Gray)', 77], ['lime', 'Band 02', 42], ['blue', 'Band 03', 42]]
const pins = [[546, 270], [1144, 236], [1131, 333], [1183, 407], [1180, 569], [713, 684]]

/* ---------- inverse distance weighting ---------- */
const power = 4.6
const samples = [
  [-252, 195, 42], [200, 300, 7], [280, 560, -1], [660, 230, 47], [945, 130, 31], [1285, 130, 97], [1542, 93, 141],
  [1200, 245, 66], [1285, 335, 99], [1045, 320, 64], [1155, 365, 52], [1507, 378, 108], [1507, 455, 37],
  [705, 690, 11], [625, 850, 64], [1000, 590, 16], [1240, 650, 63], [1430, 800, 117], [1095, 855, 49], [1175, 890, 198],
  [860, 960, 51], [835, 1045, 138], [700, 1110, 124], [550, 1200, 118], [1280, 980, 155], [1412, 1025, 177],
  [1468, 960, 115], [1140, 1080, 229], [1090, 1172, 257], [1145, 1198, 178], [870, 1225, 192], [890, 1300, 152],
  [725, 1330, 82], [1060, 1275, 155], [1012, 1362, 72], [1255, 1235, 109], [1430, 1190, 112], [1480, 1235, 78],
  [1480, 1370, 92], [1270, 1430, 138], [275, 1270, 21], [249, 1437, 33], [1659, 606, 118], [1650, 1092, 108]
]
const raster = ref(null)
onMounted(() => {
  const ctx = raster.value.getContext('2d')
  const img = ctx.createImageData(496, 470)
  let o = 0
  for (let y = 0; y < 470; y++) {
    for (let x = 0; x < 496; x++) {
      const px = x * 3 + 19.5
      const py = y * 3 + 22.5
      let a = 0
      let b = 0
      for (const [sx, sy, v] of samples) {
        const d = (px - sx) ** 2 + (py - sy) ** 2 + 0.01
        const w = Math.pow(1e4 / d, power / 2)
        a += w * v
        b += w
      }
      const g = Math.round(a / b)
      img.data[o++] = g
      img.data[o++] = g
      img.data[o++] = g
      img.data[o++] = 255
    }
  }
  ctx.putImageData(img, 0, 0)
})
</script>

<template>
  <div class="win">
    <header class="title">
      <svg class="logo" viewBox="0 0 18 18">
        <circle cx="8.300" cy="8.500" r="5.700" fill="none" stroke="#589632" stroke-width="3.800" />
        <path d="M8.500 8.500l8 8h-4l-4-4z" fill="#fff" stroke="#fff" stroke-width="2" />
        <path d="M8 8h4.500l4.500 4.500V17h-4.500L8 12.500z" fill="#93b023" />
        <path d="M8 8h3.500l1 1v3.500H9l-1-1z" fill="#ee7913" />
      </svg>
      <span v-fit="131" class="name">*Untitled Project — QGIS</span>
      <svg class="ctl" viewBox="0 0 120 22">
        <g fill="none" stroke="#111" stroke-width="1">
          <path d="M1 10.500h10" />
          <path d="M46.500 7.500h7v7h-7zM48.500 7.500v-2h7v7h-2" />
          <path d="M92 5l10 10M102 5L92 15" />
        </g>
      </svg>
    </header>

    <nav class="menu">
      <span v-for="(m, i) in menus" :key="i" v-fit="m[3]">{{ m[0] }}<u>{{ m[1] }}</u>{{ m[2] }}</span>
    </nav>

    <div v-for="(bar, i) in bars" :key="'b' + i" class="bar">
      <template v-for="(n, j) in bar" :key="j">
        <div v-if="n === '|:'" class="handle" :class="{ first: j === 0 }"><i></i></div>
        <div v-else-if="n === '/'" class="sep"></div>
        <div v-else-if="n === 'v' || n === 'V'" class="caret"><i :class="{ on: n === 'V' }"></i></div>
        <div v-else class="slot" :class="{ active: n === 'hand' }">
          <svg viewBox="0 0 24 24" fill="none" v-html="icons[n]"></svg>
        </div>
      </template>
    </div>

    <main class="body">
      <aside class="dock">
        <section class="panel browser">
          <div class="ptitle">
            <span v-fit="42">Browser</span>
            <svg class="pbtn" viewBox="0 0 26 12"><g fill="none" stroke="#555"><rect x=".5" y=".5" width="10" height="10" rx="2" /><rect x="3" y="4.500" width="3.500" height="3.500" /><path d="M5 4.500V2.800h3.500v3.700H6.500" /><rect x="14.500" y=".5" width="10" height="10" rx="2" /></g><path d="M16.800 2.800l5.400 5.400M22.200 2.800l-5.400 5.400" stroke="#555" stroke-width="2" /></svg>
          </div>
          <div class="ptools">
            <svg v-for="n in ['add', 'refresh', 'filter', 'collapse', 'info']" :key="n" viewBox="0 0 16 16" fill="none" v-html="small[n]"></svg>
          </div>
          <div class="tree">
            <div class="rows">
              <div v-for="r in browser" :key="r[1]" class="row">
                <i class="tri" :class="{ show: r[3] }"></i>
                <svg viewBox="0 0 16 16" fill="none" v-html="small[r[0]]"></svg>
                <span v-fit="r[2]">{{ r[1] }}</span>
              </div>
            </div>
            <div class="scroll"><b><i class="up"></i></b><div class="thumb"></div><div class="track"></div><b><i class="down"></i></b></div>
          </div>
        </section>

        <div class="split"><i></i></div>

        <section class="panel layers">
          <div class="ptitle">
            <span v-fit="33">Layers</span>
            <svg class="pbtn" viewBox="0 0 26 12"><g fill="none" stroke="#555"><rect x=".5" y=".5" width="10" height="10" rx="2" /><rect x="3" y="4.500" width="3.500" height="3.500" /><path d="M5 4.500V2.800h3.500v3.700H6.500" /><rect x="14.500" y=".5" width="10" height="10" rx="2" /></g><path d="M16.800 2.800l5.400 5.400M22.200 2.800l-5.400 5.400" stroke="#555" stroke-width="2" /></svg>
          </div>
          <div class="ptools">
            <svg v-for="n in ['brush', 'group', 'eye', 'filterc', 'expr']" :key="n" viewBox="0 0 16 16" fill="none" v-html="small[n]"></svg>
            <i class="pc"></i>
            <svg v-for="n in ['expand', 'collapse', 'remove']" :key="n" viewBox="0 0 16 16" fill="none" v-html="small[n]"></svg>
          </div>
          <div class="ltree">
            <div class="lrow cur">
              <i class="exp show"></i>
              <svg class="chk" viewBox="0 0 14 14"><rect x=".5" y=".5" width="12.500" height="12.500" fill="#fff" stroke="#aaa" /><path d="M3.500 6.500L6 10l4-7" fill="none" stroke="#000" stroke-width="1.900" /></svg>
              <svg class="li" viewBox="0 0 16 16" fill="none" v-html="small.raster"></svg>
              <span v-fit="115" class="ul">precipitation_idw_p5</span>
            </div>
            <div class="bandname"><span v-fit="36">Band 1</span></div>
            <div class="ramp">
              <div class="grad"></div>
              <div class="vals"><span v-fit="28">2.277</span><span v-fit="18">919</span></div>
            </div>
            <div v-for="r in lower" :key="r.text" class="lrow">
              <i class="exp" :class="{ show: r.open }"></i>
              <svg class="chk" viewBox="0 0 14 14"><rect x=".5" y=".5" width="12.500" height="12.500" fill="#fff" stroke="#aaa" /><path d="M3.500 6.500L6 10l4-7" fill="none" stroke="#000" stroke-width="1.900" /></svg>
              <svg class="li" viewBox="0 0 16 16" fill="none" v-html="small[r.icon]"></svg>
              <span v-fit="r.w">{{ r.text }}</span>
            </div>
            <div v-for="b in bands" :key="b[1]" class="brow">
              <i :class="b[0]"></i><span v-fit="b[2]">{{ b[1] }}</span>
            </div>
          </div>
        </section>
      </aside>

      <div class="vsplit"><i></i></div>

      <div class="map">
        <svg class="pins" viewBox="434 200 932 500">
          <circle v-for="(p, i) in pins" :key="i" :cx="p[0]" :cy="p[1]" r="3.900" fill="#e8677f" stroke="#2b2325" />
        </svg>
        <canvas ref="raster" class="raster" width="496" height="470"></canvas>
      </div>
    </main>

    <footer class="status">
      <div class="locate">
        <svg viewBox="0 0 14 14"><circle cx="5.500" cy="5.500" r="4.200" fill="none" stroke="#888" stroke-width="1.200" /><path d="M8.500 8.500l4 4" stroke="#888" stroke-width="1.600" /></svg>
        <span v-fit="112">Type to locate (Ctrl+K)</span>
      </div>
      <span v-fit="53" class="l coord">Coordinate</span>
      <div class="field f1"><span v-fit="81">487703 4502998</span></div>
      <svg class="mouse" viewBox="0 0 16 16"><g fill="none" stroke="#222" stroke-width="1.100"><path d="M2 4c2-3 5-2 7 1l4 5c1 3-2 5-5 4-2-1-4-5-6-7zM3 8l6-5M5 2l3 5M6.500 10l5-4.500" /><path d="M10 4l3-2.500M12 6l3.500-2" stroke-dasharray="1 1" /><circle cx="9.500" cy="11" r="1.800" /><path d="M1 11l3 2" /></g></svg>
      <span v-fit="25" class="l">Scale</span>
      <div class="field f2"><span v-fit="45">1:260513</span><div class="drop"><i class="down"></i></div></div>
      <svg class="lock" viewBox="0 0 14 16"><path d="M3.500 7V5a3.500 3.500 0 0 1 7 0v2" fill="none" stroke="#777" stroke-width="1.700" /><rect x="1" y="7" width="12" height="8" rx="1" fill="#666" /></svg>
      <span v-fit="44" class="l">Magnifier</span>
      <div class="field f3"><span v-fit="29">100%</span><div class="spin"><i class="up"></i><i class="down"></i></div></div>
      <span v-fit="41" class="l rot">Rotation</span>
      <div class="field f4"><span v-fit="24">0,0 °</span><div class="spin"><i class="up"></i><i class="down"></i></div></div>
      <svg class="chk sc" viewBox="0 0 14 14"><rect x=".5" y=".5" width="12.500" height="12.500" fill="#fff" stroke="#aaa" /><path d="M3.500 6.500L6 10l4-7" fill="none" stroke="#000" stroke-width="1.900" /></svg>
      <span v-fit="35" class="l">Render</span>
      <svg class="proj" viewBox="0 0 16 14"><ellipse cx="8" cy="7" rx="6.500" ry="5.500" fill="#888" stroke="#555" /><path d="M8 1v13M1.500 5h13M1.500 9h13M8 1.500c-4 3-4 8 0 11M8 1.500c4 3 4 8 0 11" fill="none" stroke="#eee" stroke-width=".8" /></svg>
      <span v-fit="60" class="l">EPSG:32633</span>
      <svg class="msg" viewBox="0 0 18 16"><path d="M9 1c4.500 0 7.500 2.500 7.500 6 0 2-.8 3.300-2 4.300.2 1.300.8 2.300 2 3.200-2 .2-4-.5-5-1.800C6 13.500 1 11.500 1 7c0-3.500 3.500-6 8-6z" fill="#666" /></svg>
    </footer>
  </div>
</template>

<style>
html, body { margin: 0; background: #efefef; overflow: hidden; }
</style>

<style scoped>
.win { width: 1366px; height: 728px; display: flex; flex-direction: column; background: #efefef; overflow: hidden; font: 11.5px/18px "Open Sans", "Noto Sans", sans-serif; color: #000; }
.win span { white-space: nowrap; flex: none; }
.win svg { display: block; flex: none; overflow: visible; }
.title { height: 23px; background: #fff; display: flex; align-items: center; flex: none; }
.logo { width: 18px; height: 18px; margin-left: 2px; }
.name { margin-left: 3px; font-size: 12px; }
.ctl { width: 120px; height: 22px; margin-left: auto; margin-right: 2px; }
.menu { height: 19px; display: flex; gap: 14px; padding-left: 10px; align-items: center; flex: none; border-bottom: 1px solid #d6d6d6; font-size: 12px; }
.menu u { text-underline-offset: 2px; text-decoration-thickness: 1px; }

.bar { height: 38px; flex: none; display: flex; align-items: center; background: linear-gradient(#fbfbfb, #ededed); border-bottom: 1px solid #b4b4b4; }
.slot { width: 33px; height: 32px; flex: none; display: flex; align-items: center; justify-content: center; box-sizing: border-box; }
.slot svg { width: 24px; height: 24px; }
.slot.active { background: #dadada; box-shadow: inset 0 0 0 1px #adadad; border-radius: 3px; }
.handle { width: 16px; flex: none; display: flex; justify-content: flex-end; padding-right: 4px; box-sizing: border-box; }
.handle.first { width: 12.5px; }
.handle i { width: 4px; height: 18px; background: radial-gradient(circle at .5px .5px, #aaa .7px, transparent .9px) 0 0 / 3px 3px; }
.sep { width: 1px; height: 20px; margin: 0 3px; background: #cfcfcf; flex: none; }
.caret { width: 12px; flex: none; display: flex; justify-content: center; padding-right: 2px; box-sizing: border-box; }
.caret i, .pc { width: 0; border: 4px solid transparent; border-top-color: #a5a5a5; border-bottom: 0; }
.caret i.on { border-top-color: #4a4a4a; }

.body { flex: 1; display: flex; min-height: 0; }
.dock { width: 427px; display: flex; flex-direction: column; flex: none; }
.ptitle { display: flex; align-items: center; height: 20px; padding: 0 1px 0 4px; }
.pbtn { width: 26px; height: 12px; margin-left: auto; }
.ptools { display: flex; align-items: center; gap: 9px; padding: 0 0 2px 8px; height: 30px; box-sizing: border-box; }
.ptools svg { width: 16px; height: 16px; }
.browser { height: 176px; flex: none; display: flex; flex-direction: column; }
.tree { flex: 1; min-height: 0; display: flex; border: 1px solid #b4b4b4; background: #fff; }
.rows { flex: 1; overflow: hidden; }
.row { height: 18px; display: flex; align-items: center; }
.row span, .lrow span, .brow span { padding-top: 1px; line-height: 19px; }
.row svg { width: 16px; height: 16px; margin: 0 6px 0 5px; }
.tri { width: 10px; height: 8px; margin-left: 4px; box-sizing: border-box; flex: none; visibility: hidden; }
.tri.show { visibility: visible; }
.tri::before { content: ""; display: block; margin-left: 2px; width: 0; border: 4px solid transparent; border-left: 5px solid #555; border-right: 0; }
.scroll { width: 13px; border-left: 1px solid #b4b4b4; display: flex; flex-direction: column; background: #fbfbfb; }
.scroll b { height: 13px; display: flex; align-items: center; justify-content: center; padding-right: 1px; }
.thumb { height: 30px; background: #fff; border-top: 1px solid #b4b4b4; border-bottom: 1px solid #b4b4b4; }
.track { flex: 1; background: #e3e3e3; border-bottom: 1px solid #b4b4b4; }
.up, .down { width: 0; border: 4px solid transparent; display: block; }
.up { border-bottom-color: #555; border-top: 0; }
.down { border-top-color: #555; border-bottom: 0; }
.split { height: 6px; display: flex; justify-content: center; align-items: center; flex: none; padding-left: 3px; }
.split i { width: 18px; height: 1px; background: repeating-linear-gradient(90deg, #aaa 0 1px, transparent 1px 3px); }
.layers { flex: 1; display: flex; flex-direction: column; min-height: 0; }
.pc { margin: 0 0 0 -4px; }
.pc + svg { margin-left: -1px; }
.ltree { flex: 1; border: 1px solid #b4b4b4; background: #fff; min-height: 0; }
.lrow { height: 18px; display: flex; align-items: center; font-weight: 700; font-size: 11.5px; }
.lrow.cur { background: #efefef; }
.exp { width: 8px; margin: 0 9px 0 6px; visibility: hidden; flex: none; }
.exp.show { visibility: visible; }
.exp::before { content: ""; display: block; width: 0; border: 4px solid transparent; border-top: 5px solid #555; border-bottom: 0; }
.chk { width: 14px; height: 14px; }
.li { width: 16px; height: 16px; margin: 0 6px 0 6px; }
.ul { text-decoration: underline; text-decoration-skip-ink: none; text-underline-offset: 2px; text-decoration-thickness: 1px; }
.bandname { height: 16px; line-height: 16px; padding-left: 43px; display: flex; }
.ramp { display: flex; height: 96px; padding-left: 43px; padding-bottom: 1px; box-sizing: content-box; }
.grad { width: 16px; height: 96px; background: linear-gradient(#fff, #000); }
.vals { display: flex; flex-direction: column; justify-content: space-between; align-items: flex-start; padding-left: 4.5px; font-size: 11px; line-height: 13px; }
.brow { height: 18px; display: flex; align-items: center; padding-left: 43px; }
.brow i { width: 16px; height: 16px; margin-right: 6px; }
.red { background: #f00; }
.lime { background: #0f0; }
.blue { background: #00f; }
.vsplit { width: 6px; flex: none; display: flex; align-items: center; justify-content: center; }
.vsplit i { width: 1px; height: 18px; background: repeating-linear-gradient(#aaa 0 1px, transparent 1px 3px); }
.map { flex: 1; background: #fff; border: solid #b4b4b4; border-width: 1px 0 1px 1px; position: relative; overflow: hidden; }
.pins { position: absolute; left: 0; top: 0; width: 932px; height: 500px; }
.raster { position: absolute; left: 202px; top: 12px; width: 496px; height: 470px; }

.status { height: 28px; flex: none; display: flex; align-items: center; }
.status span { padding-top: 1px; }
.locate { width: 200px; height: 22px; box-sizing: border-box; border: 1px solid #aaa; border-radius: 3px; background: #fff; margin-left: 4px; display: flex; align-items: center; padding-left: 8px; color: #777; }
.locate svg { width: 14px; height: 14px; margin-right: 5px; }
.coord { margin-left: 362px; margin-right: 4px; }
.field { height: 22px; box-sizing: border-box; border: 1px solid #aaa; border-radius: 3px; background: #fff; display: flex; align-items: center; padding-left: 4px; flex: none; }
.f1 { width: 96px; padding-left: 6px; }
.mouse { width: 16px; height: 16px; margin: 0 12px 0 4px; }
.f2 { width: 81px; margin-left: 4px; }
.drop { width: 20px; height: 100%; margin-left: auto; border-left: 1px solid #aaa; display: flex; align-items: center; justify-content: center; }
.lock { width: 14px; height: 16px; margin: 0 7px 0 11px; }
.f3 { width: 84px; margin-left: 4px; }
.f4 { width: 84px; margin-left: 10px; }
.spin { width: 14px; height: 100%; margin-left: auto; border-left: 1px solid #aaa; display: flex; flex-direction: column; align-items: center; justify-content: center; gap: 4px; }
.rot { margin-left: 8px; }
.sc { margin: 0 4px 0 6px; }
.proj { width: 16px; height: 14px; margin: 0 1px 0 16px; }
.msg { width: 18px; height: 16px; margin-left: 22px; }
</style>
